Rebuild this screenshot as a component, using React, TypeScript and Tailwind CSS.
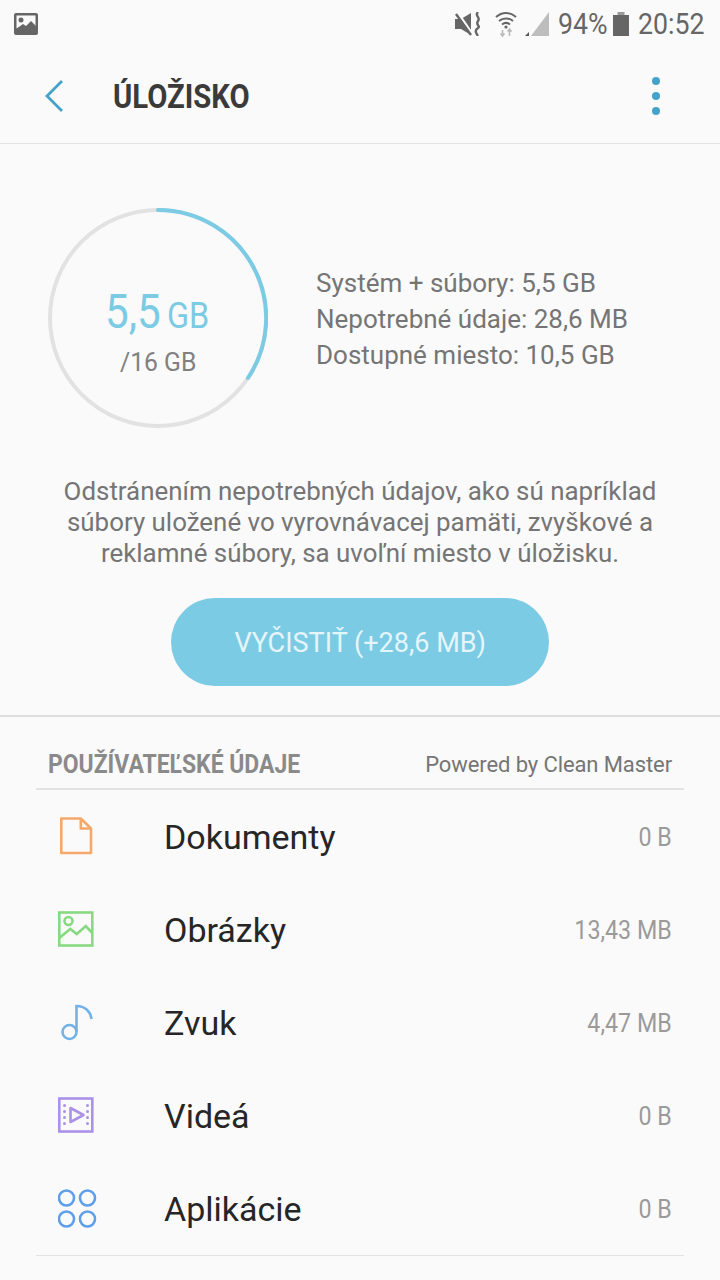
import type { ReactNode } from 'react'

const rows: { name: string; size: string; icon: ReactNode }[] = [
  {
    name: 'Dokumenty',
    size: '0 B',
    icon: (
      <svg width="40" height="40" viewBox="0 0 40 40" fill="none" stroke="#f4a869" strokeWidth="2.6" strokeLinejoin="round">
        <path d="M3.300 1.500h19.500L33 11.500v24.500H3.300z" />
        <path d="M22.800 1.500V11.500H33" />
      </svg>
    ),
  },
  {
    name: 'Obrázky',
    size: '13,43 MB',
    icon: (
      <svg width="40" height="38" viewBox="0 0 40 38" fill="none" stroke="#88d982" strokeWidth="2.6">
        <rect x="1.300" y="1.500" width="33" height="33" />
        <circle cx="10.500" cy="10" r="4" />
        <path d="M1.300 27l11-9 6.500 5 9-8 6.500 7" />
      </svg>
    ),
  },
  {
    name: 'Zvuk',
    size: '4,47 MB',
    icon: (
      <svg width="40" height="38" viewBox="0 0 40 38" fill="none" stroke="#72b2e6" strokeWidth="2.6">
        <circle cx="11.500" cy="28" r="7" />
        <path d="M18.500 28V2c8 0 14 5 15 13" />
      </svg>
    ),
  },
  {
    name: 'Videá',
    size: '0 B',
    icon: (
      <svg width="40" height="38" viewBox="0 0 40 38" fill="none" stroke="#ab92e8" strokeWidth="2.6">
        <rect x="1.300" y="1.500" width="33" height="33" />
        <path d="M12.500 11v14l13-7z" strokeLinejoin="round" />
        <g fill="#ab92e8" stroke="none">
          <circle cx="6.500" cy="8.500" r="1.500" />
          <circle cx="6.500" cy="14.500" r="1.500" />
          <circle cx="6.500" cy="20.500" r="1.500" />
          <circle cx="6.500" cy="26.500" r="1.500" />
          <circle cx="29.500" cy="8.500" r="1.500" />
          <circle cx="29.500" cy="14.500" r="1.500" />
          <circle cx="29.500" cy="20.500" r="1.500" />
          <circle cx="29.500" cy="26.500" r="1.500" />
        </g>
      </svg>
    ),
  },
  {
    name: 'Aplikácie',
    size: '0 B',
    icon: (
      <svg width="40" height="40" viewBox="0 0 40 40" fill="none" stroke="#5f9fea" strokeWidth="2.6">
        <circle cx="8.500" cy="9" r="7.500" />
        <circle cx="29.500" cy="9" r="7.500" />
        <circle cx="8.500" cy="30" r="7.500" />
        <circle cx="29.500" cy="30" r="7.500" />
      </svg>
    ),
  },
]

function StatusBar() {
  return (
    <div className="flex h-[48px] items-center justify-between pl-[14px] pr-[16px] text-[#666]">
      <svg width="24" height="24" viewBox="0 0 24 24">
        <rect x="0" y="1" width="24" height="22" rx="2" fill="#666" />
        <rect x="2.500" y="3.500" width="19" height="13" fill="#fafafa" />
        <circle cx="7" cy="8" r="2.500" fill="#666" />
        <path d="M2 17l7-5 3 2 5-5 5 5v5H2z" fill="#666" />
      </svg>
      <div className="flex items-center">
        <svg width="26" height="24" viewBox="0 0 26 24" fill="none" className="mr-[14px]">
          <path d="M0 7h6l10-6v22L6 17H0z" fill="#666" />
          <path d="M3 1l15 22" stroke="#fafafa" strokeWidth="2.500" />
          <path d="M1 2l15 21" stroke="#666" strokeWidth="2.400" />
          <path d="M23 0c-4 4 3 5 0 9s3 5 0 7-3 4 0 8" stroke="#666" strokeWidth="2.400" />
        </svg>
        <svg width="22" height="26" viewBox="0 0 22 26" fill="none" stroke="#666" strokeWidth="2" className="mr-[8px]">
          <path d="M1 6c6-5.500 14-5.500 20 0" />
          <path d="M4 10c4-3.500 10-3.500 14 0" />
          <path d="M7 13.500c2.500-2 5.500-2 8 0" />
          <circle cx="11" cy="16" r="1.600" fill="#666" stroke="none" />
          <path d="M7.500 19v6M14.500 25v-7M5.500 22.500l2 2.500 2-2.500M12.500 20.500l2-2.500 2 2.500" stroke="#bbb" strokeWidth="1.600" />
        </svg>
        <svg width="24" height="24" viewBox="0 0 24 24" className="mr-[9px]">
          <path d="M24 0v24H6z" fill="#bdbdbd" />
          <path d="M0 24l4-4v4z" fill="#555" />
        </svg>
        <span className="w-[48px] origin-left scale-x-[0.89] whitespace-nowrap text-[30px] leading-none">94%</span>
        <svg width="16" height="24" viewBox="0 0 16 24" className="ml-[7px] mr-[9px]" fill="#666">
          <rect x="4.500" y="0" width="7" height="3" fill="#999" />
          <rect x="0" y="3" width="16" height="21" />
        </svg>
        <span className="w-[66px] origin-left scale-x-[0.89] whitespace-nowrap text-[30px] leading-none">20:52</span>
      </div>
    </div>
  )
}

function Header() {
  return (
    <div className="flex h-[96px] items-center border-b border-[#e4e4e4] pl-[44px] pr-[60px]">
      <svg width="22" height="34" viewBox="0 0 22 34" fill="none" stroke="#45a3c9" strokeWidth="2.800">
        <path d="M18 2L3 17l15 15" />
      </svg>
      <h1 className="ml-[47px] flex-1 origin-left scale-x-[0.86] text-[34px] font-bold leading-none text-[#3a3a3a]">ÚLOŽISKO</h1>
      <div className="flex flex-col gap-[7px]">
        <span className="size-[8px] rounded-full bg-[#45a3c9]" />
        <span className="size-[8px] rounded-full bg-[#45a3c9]" />
        <span className="size-[8px] rounded-full bg-[#45a3c9]" />
      </div>
    </div>
  )
}

function StorageCard() {
  return (
    <div className="border-b-2 border-[#dedede] pb-[29px]">
      <div className="flex items-center pl-[48px] pt-[64px]">
        <div className="relative size-[220px]">
          <svg width="220" height="220" viewBox="0 0 220 220" fill="none" strokeWidth="4">
            <circle cx="110" cy="110" r="108" stroke="#e2e2e2" />
            <path d="M110 2A108 108 0 0 1 200 170" stroke="#7ccbe4" strokeLinecap="round" />
          </svg>
          <div className="absolute inset-0 flex flex-col items-center justify-center pt-[29px]">
            <div className="flex items-baseline text-[#7ccbe4]">
              <span className="-ml-[3px] w-[54px] origin-left scale-x-[0.88] whitespace-nowrap text-[48px] leading-[52px]">5,5</span>
              <span className="ml-[8px] w-[41px] origin-left scale-x-[0.9] whitespace-nowrap text-[36px] leading-[52px]">GB</span>
            </div>
            <span className="mt-[2px] w-[76px] origin-left scale-x-[0.95] whitespace-nowrap text-[26px] leading-[36px] text-[#808080]">/16 GB</span>
          </div>
        </div>
        <div className="ml-[48px] mt-[2px] text-[26px] leading-[36px] text-[#757575]">
          <p>Systém + súbory: 5,5 GB</p>
          <p>Nepotrebné údaje: 28,6 MB</p>
          <p>Dostupné miesto: 10,5 GB</p>
        </div>
      </div>
      <p className="mt-[48px] text-center text-[25.9px] leading-[31px] text-[#757575]">
        Odstránením nepotrebných údajov, ako sú napríklad
        <br />
        súbory uložené vo vyrovnávacej pamäti, zvyškové a
        <br />
        reklamné súbory, sa uvoľní miesto v úložisku.
      </p>
      <button className="mx-auto mt-[29px] flex h-[88px] w-[378px] items-center justify-center rounded-full bg-[#7ccbe4] pt-[2px] text-[#e6f5fa]">
        <span className="scale-x-[0.965] whitespace-nowrap text-[28px]">VYČISTIŤ (+28,6 MB)</span>
      </button>
    </div>
  )
}

export default function App() {
  return (
    <div className="h-[1280px] w-[720px] overflow-hidden bg-[#fafafa] [font-family:Roboto,sans-serif]">
      <StatusBar />
      <Header />
      <StorageCard />
      <div className="mx-[36px]">
        <div className="flex h-[73px] items-end justify-between border-b-2 border-[#e2e2e2] px-[12px] pb-[7px]">
          <span className="w-[252px] origin-left scale-x-[0.917] whitespace-nowrap text-[25px] font-bold leading-[32px] text-[#8a8a8a]">
            POUŽÍVATEĽSKÉ ÚDAJE
          </span>
          <span className="text-[22px] leading-[32px] tracking-[-0.1px] text-[#757575]">Powered by Clean Master</span>
        </div>
        <div className="border-b border-[#e4e4e4]">
          {rows.map((r) => (
            <div key={r.name} className="flex h-[93px] items-center px-[12px]">
              <div className="flex w-[116px] items-center pl-[10px]">{r.icon}</div>
              <span className="flex-1 text-[34px] leading-none text-[#262626]">{r.name}</span>
              <span className="origin-right scale-x-[0.93] pt-[2px] text-[25px] leading-none text-[#9a9a9a]">{r.size}</span>
            </div>
          ))}
        </div>
      </div>
    </div>
  )
}
